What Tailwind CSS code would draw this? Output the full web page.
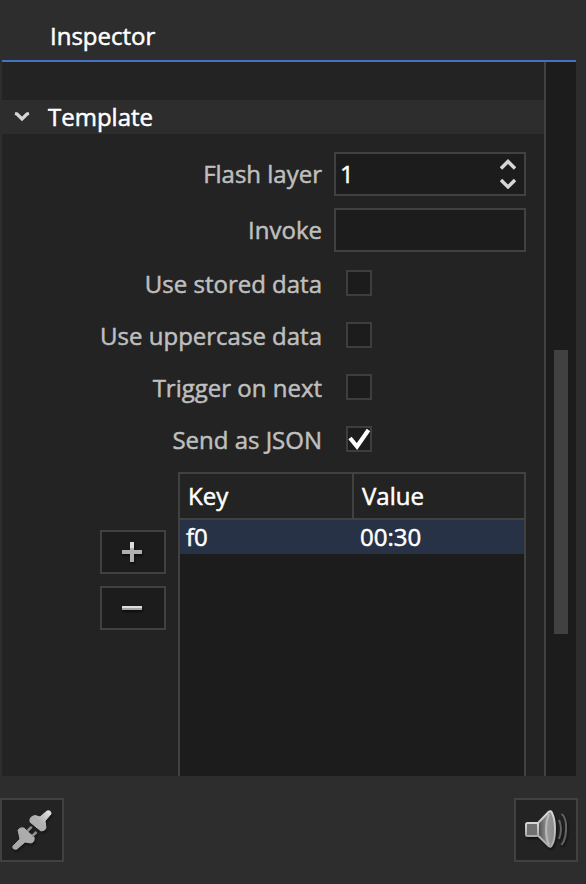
<!DOCTYPE html>
<html lang="en"><head><meta charset="utf-8"><title>Inspector</title>
<script src="https://cdn.jsdelivr.net/npm/@tailwindcss/browser@4"></script></head>
<body class="w-[586px] h-[884px] overflow-hidden bg-[#2d2d2d] text-white text-[24px] leading-[34px] font-['Open_Sans','Noto_Sans',sans-serif] [-webkit-text-stroke:0.5px]">
<div class="flex flex-col h-[884px]">
  <header class="ml-[2px] w-[574px] h-[62px] border-b-2 border-[#4670c4] pl-12 pt-[19px]">Inspector</header>
  <main class="ml-[2px] w-[574px] h-[714px] flex overflow-hidden">
    <section class="w-[544px] h-full border-r-2 border-[#414141] bg-[#232323] pt-[38px] overflow-hidden">
      <h2 class="h-[34px] bg-[#2d2d2d] flex items-center pl-3">
        <svg class="w-4 h-[10px]" viewBox="0 0 16 10" fill="none" stroke="#d6d6d6" stroke-width="3.2"><path d="M1 1.5 L3 2 L8 7 L13 2 L15 1.5"/></svg>
        <span class="ml-[18px]">Template</span>
      </h2>
      <div class="mt-[18px] flex flex-col gap-3 text-[#bfbfbf]">
        <div class="flex h-11 items-center"><label class="w-[320px] text-right">Flash layer</label>
          <div class="ml-3 w-[192px] h-11 border-2 border-[#414141] bg-[#1c1c1c] text-white flex items-center justify-between pl-[4px] pr-2"><span>1</span>
            <svg class="w-4 h-[30px]" viewBox="0 0 16 30" fill="none" stroke="#d6d6d6" stroke-width="3.4"><path d="M1 9.5 L8 2.5 L15 9.5M1 21 L8 28 L15 21"/></svg>
          </div></div>
        <div class="flex h-11 items-center"><label class="w-[320px] text-right">Invoke</label><div class="ml-3 w-[192px] h-11 border-2 border-[#414141] bg-[#1c1c1c]"></div></div>
      </div>
      <div class="mt-[18px] flex flex-col gap-[26px] text-[#bfbfbf]">
        <div class="flex h-[26px] items-center"><label class="w-[320px] text-right pt-[2px]">Use stored data</label><div class="ml-6 size-[26px] border-2 border-[#3e3e3e] bg-[#1c1c1c]"></div></div>
        <div class="flex h-[26px] items-center"><label class="w-[320px] text-right pt-[2px]">Use uppercase data</label><div class="ml-6 size-[26px] border-2 border-[#3e3e3e] bg-[#1c1c1c]"></div></div>
        <div class="flex h-[26px] items-center"><label class="w-[320px] text-right pt-[2px]">Trigger on next</label><div class="ml-6 size-[26px] border-2 border-[#3e3e3e] bg-[#1c1c1c]"></div></div>
        <div class="flex h-[26px] items-center"><label class="w-[320px] text-right pt-[2px]">Send as JSON</label><div class="ml-6 size-[26px] border-2 border-[#3e3e3e] bg-[#1c1c1c]">
          <svg class="size-[22px]" viewBox="0 0 22 22" fill="none" stroke="#fff" stroke-width="4.2"><path d="M2 10 L9 18.5 L20.5 2"/></svg></div></div>
      </div>
      <div class="mt-5 ml-[98px] flex gap-3">
        <div class="pt-[58px] flex flex-col gap-3">
          <button class="w-[66px] h-11 border-2 border-[#414141] bg-[#1c1c1c] flex items-center justify-center pr-[2px]"><svg class="size-6 drop-shadow-[1px_2px_1px_#0008]" viewBox="0 0 24 24"><path fill="#b0b0b0" d="M10 2h4v8h8v4h-8v8h-4v-8H2v-4h8z"/><path fill="#dedede" d="M10 2h4v6h-4z"/></svg></button>
          <button class="w-[66px] h-11 border-2 border-[#414141] bg-[#1c1c1c] flex items-center justify-center pr-[2px]"><svg class="size-6 drop-shadow-[1px_2px_1px_#0008]" viewBox="0 0 24 24"><path fill="#dedede" d="M2 10h20v2H2z"/><path fill="#a5a5a5" d="M2 12h20v2H2z"/></svg></button>
        </div>
        <div class="w-[348px] h-[400px] border-2 border-[#414141] bg-[#1c1c1c]">
          <div class="flex h-[46px] border-b-2 border-[#414141] bg-[#232323] leading-[44px]"><div class="w-[174px] border-r-2 border-[#414141] pl-2">Key</div><div class="pl-2">Value</div></div>
          <div class="flex h-[34px] bg-[#283246]"><div class="w-[174px] pl-[6px]">f0</div><div class="pl-[6px]">00:30</div></div>
        </div>
      </div>
    </section>
    <aside class="w-[30px] bg-[#1c1c1c] pt-[288px] pl-2"><div class="w-[14px] h-[284px] bg-[#414141]"></div></aside>
  </main>
  <footer class="mt-[22px] w-[578px] flex justify-between">
    <button class="size-16 border-2 border-[#414141] bg-[#232323]"><svg class="size-[60px] drop-shadow-[1px_2px_1px_#0006]" viewBox="2 800 60 60">
      <defs><linearGradient id="p" gradientUnits="userSpaceOnUse" x1="12" y1="850" x2="52" y2="810"><stop stop-color="#a8a8a8"/><stop offset=".7" stop-color="#b0b0b0"/><stop offset="1" stop-color="#eee"/></linearGradient></defs>
      <g fill="url(#p)" stroke="url(#p)" stroke-width="1" stroke-linejoin="round"><path d="M30 819 Q31 816 35 815.500 L40 817 L47 811 Q51 810 51 814 L45 821 L46 828 Q45 831 41 831 L36 827 L30 822Z"/><path d="M18 830 Q20 827 24 828 L28 832 L34 837 Q35 842 31 843 L25 842 L17 849 Q12 850 13 846 L20 839Z"/></g>
      <path d="M27.500 831 L31 827.500V826.500M32 835.500H33L36.500 832" stroke="#909090" stroke-width="2.5" fill="none"/></svg></button>
    <button class="size-16 border-2 border-[#414141] bg-[#232323]"><svg class="size-[60px] drop-shadow-[1px_2px_1px_#0008]" viewBox="516 800 60 60">
      <defs><linearGradient id="c"><stop stop-color="#4c4c4c"/><stop offset=".55" stop-color="#999"/><stop offset="1" stop-color="#888"/></linearGradient><linearGradient id="b" x1="0" x2="0" y1="0" y2="1"><stop stop-color="#d8d8d8"/><stop offset="1" stop-color="#aaa"/></linearGradient></defs>
      <path d="M538 823 L548.500 812 Q551 810 552 813 Q555 819 555 829 Q555 840 552 845 Q551 848 548.500 846 L538 835.500Z" fill="url(#c)" stroke="url(#b)" stroke-width="2"/>
      <path d="M549 814 Q546 821 546 829 Q546 838 549 845" stroke="#b8b8b8" stroke-width="2" fill="none"/>
      <rect x="526" y="823" width="12" height="13" rx="1.5" fill="#707070" stroke="url(#b)" stroke-width="2"/>
      <path d="M559 820 Q563 829 559 839M561.500 814 Q565 816 566 824 Q567 838 561.500 845" stroke="#646464" stroke-width="2" fill="none"/></svg></button>
  </footer>
</div>
</body></html>
